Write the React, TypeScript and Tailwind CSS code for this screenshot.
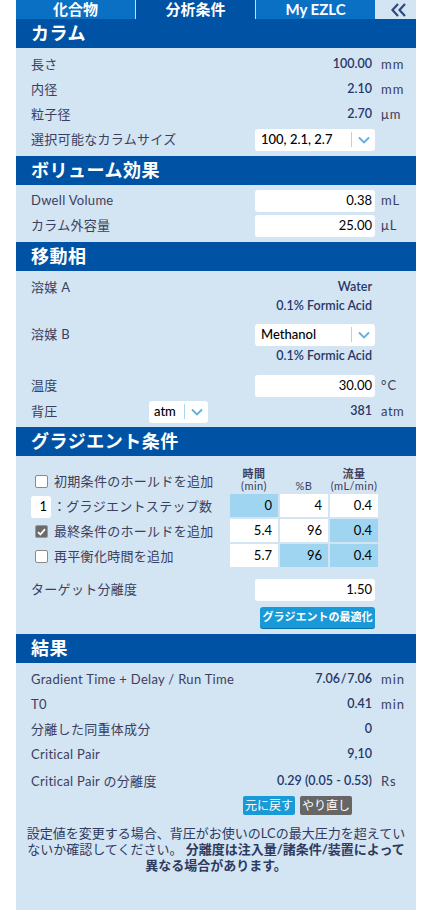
import React from "react";

const LABEL = "text-[13px] tracking-[0.3px] text-[#3b4060]";
const VALUE = "pr-[3px] text-[12.5px] font-semibold text-[#27376a] whitespace-nowrap";

function Chevron({ className = "" }: { className?: string }) {
  return (
    <svg width="12" height="8" viewBox="0 0 12 8" className={className}>
      <path d="M1 1.5 L6 6.5 L11 1.5" fill="none" stroke="#5fb0e0" strokeWidth="1.8" />
    </svg>
  );
}

function Header({ children }: { children: React.ReactNode }) {
  return (
    <div className="h-[29px] bg-[#0053a4] flex items-center pl-[15px] text-white text-[18px] font-bold tracking-[0.5px]">
      {children}
    </div>
  );
}

function Row({
  label,
  children,
  unit,
  className = "",
}: {
  label?: React.ReactNode;
  children?: React.ReactNode;
  unit?: React.ReactNode;
  className?: string;
}) {
  return (
    <div className={`flex items-center h-[25px] pl-[15px] ${className}`}>
      <div className={`flex-1 ${LABEL}`}>{label}</div>
      <div className="w-[120px] flex justify-end">{children}</div>
      <div className={`w-[41px] pl-[6px] ${LABEL} tracking-[1px]`}>{unit}</div>
    </div>
  );
}

function InputBox({ value }: { value: string }) {
  return (
    <div className="w-[120px] h-[22px] bg-white rounded-[3px] flex items-center justify-end pr-[3px] text-[13px] text-black">
      {value}
    </div>
  );
}

function Select({ value, width = "w-[120px]", textPad = "pl-[6px]" }: { value: string; width?: string; textPad?: string }) {
  return (
    <div className={`${width} h-[22px] bg-white rounded-[3px] flex items-center ${textPad}`}>
      <span className="flex-1 text-[13px] text-black font-medium">{value}</span>
      <div className="w-px h-[15px] bg-[#a9d6ef]" />
      <div className="w-[23px] flex justify-center">
        <Chevron />
      </div>
    </div>
  );
}

function Checkbox({ checked = false }: { checked?: boolean }) {
  if (checked) {
    return (
      <div className="w-[13px] h-[13px] rounded-[2px] bg-[#6b6b6b] border border-[#9a9a9a] flex items-center justify-center">
        <svg width="9" height="8" viewBox="0 0 9 8">
          <path d="M1 4.2 L3.4 6.5 L8 1.2" fill="none" stroke="white" strokeWidth="1.8" />
        </svg>
      </div>
    );
  }
  return <div className="w-[13px] h-[13px] rounded-[2px] bg-white border border-[#8a8a8a]" />;
}

function Cell({ v, blue }: { v: string; blue?: boolean }) {
  return (
    <div
      className={`h-[23px] flex items-center justify-end pr-[6px] text-[13px] text-black ${
        blue ? "bg-[#9fd5f1]" : "bg-white"
      }`}
    >
      {v}
    </div>
  );
}

export default function App() {
  return (
    <div className="w-[428px] h-[912px] bg-white font-['Lato','Noto_Sans_CJK_JP',sans-serif]">
      <div className="ml-4 w-[400px] h-[910px] bg-[#d3e4f3] flex flex-col">
        {/* Tabs */}
        <div className="flex h-[19px]">
          <div className="w-[119px] bg-[#0a70c4] text-white text-[15px] font-bold flex items-center justify-center leading-none">
            化合物
          </div>
          <div className="w-px bg-[#c9ddef]" />
          <div className="w-[119px] bg-[#0053a4] text-white text-[15px] font-bold flex items-center justify-center leading-none">
            分析条件
          </div>
          <div className="w-px bg-[#c9ddef]" />
          <div className="w-[119px] bg-[#0a70c4] text-white text-[15px] font-bold flex items-center justify-center leading-none">
            My EZLC
          </div>
          <div className="flex-1 flex items-center justify-center pl-[6px]">
            <svg width="17" height="14" viewBox="0 0 17 14">
              <path d="M8 1 L2.5 7 L8 13" fill="none" stroke="#2c4a7c" strokeWidth="2.2" />
              <path d="M15 1 L9.5 7 L15 13" fill="none" stroke="#2c4a7c" strokeWidth="2.2" />
            </svg>
          </div>
        </div>

        {/* カラム */}
        <Header>カラム</Header>
        <div className="pt-[4px] pb-[4px]">
          <Row label="長さ" unit="mm">
            <span className={VALUE}>100.00</span>
          </Row>
          <Row label="内径" unit="mm">
            <span className={VALUE}>2.10</span>
          </Row>
          <Row label="粒子径" unit="μm">
            <span className={VALUE}>2.70</span>
          </Row>
          <Row label="選択可能なカラムサイズ">
            <Select value="100, 2.1, 2.7" />
          </Row>
        </div>

        {/* ボリューム効果 */}
        <Header>ボリューム効果</Header>
        <div className="pt-[3px] pb-[4px]">
          <Row label="Dwell Volume" unit="mL">
            <InputBox value="0.38" />
          </Row>
          <Row label="カラム外容量" unit="μL">
            <InputBox value="25.00" />
          </Row>
        </div>

        {/* 移動相 */}
        <Header>移動相</Header>
        <div className="pt-[4px] pb-[3px]">
          <Row label="溶媒 A">
            <span className={VALUE}>Water</span>
          </Row>
          <Row className="!h-[13px]">
            <span className={VALUE}>0.1% Formic Acid</span>
          </Row>
          <Row label="溶媒 B" className="mt-[9px]">
            <Select value="Methanol" />
          </Row>
          <Row className="!h-[14px] mt-[2px]">
            <span className={VALUE}>0.1% Formic Acid</span>
          </Row>
          <Row label="温度" unit="°C" className="mt-[10px]">
            <InputBox value="30.00" />
          </Row>
          <div className="flex items-center h-[25px] pl-[15px] mt-[1px]">
            <div className={`w-[118px] ${LABEL}`}>背圧</div>
            <Select value="atm" width="w-[59px]" textPad="pl-[5px]" />
            <div className="flex-1 flex justify-end">
              <span className={VALUE}>381</span>
            </div>
            <div className={`w-[41px] pl-[6px] ${LABEL} tracking-[0.5px]`}>atm</div>
          </div>
        </div>

        {/* グラジエント条件 */}
        <Header>グラジエント条件</Header>
        <div className="flex">
          <div className="w-[214px] pt-[13px]">
            <div className="h-[25px] flex items-center pl-[19px] gap-[6px]">
              <Checkbox />
              <span className={LABEL}>初期条件のホールドを追加</span>
            </div>
            <div className="h-[25px] flex items-center pl-[15px]">
              <div className="w-[20px] h-[22px] bg-white rounded-[3px] flex items-center justify-end pr-[4px] text-[13px] text-black">
                1
              </div>
              <span className={`${LABEL} ml-[2px]`}>：グラジエントステップ数</span>
            </div>
            <div className="h-[25px] flex items-center pl-[19px] gap-[6px]">
              <Checkbox checked />
              <span className={LABEL}>最終条件のホールドを追加</span>
            </div>
            <div className="h-[25px] flex items-center pl-[19px] gap-[6px]">
              <Checkbox />
              <span className={LABEL}>再平衡化時間を追加</span>
            </div>
          </div>
          <div className="w-[148px] pt-[10px]">
            <div className="grid grid-cols-3 gap-x-[2px] h-[26px] items-end text-[11px] leading-[12px] text-[#3b4060] text-center tracking-[0.5px]">
              <div>
                <div className="font-bold">時間</div>
                <div>(min)</div>
              </div>
              <div>%B</div>
              <div>
                <div className="font-bold">流量</div>
                <div>(mL/min)</div>
              </div>
            </div>
            <div className="grid grid-cols-3 gap-[2px] mt-[2px]">
              <Cell v="0" blue />
              <Cell v="4" />
              <Cell v="0.4" />
              <Cell v="5.4" />
              <Cell v="96" />
              <Cell v="0.4" blue />
              <Cell v="5.7" />
              <Cell v="96" blue />
              <Cell v="0.4" blue />
            </div>
          </div>
        </div>
        <Row label="ターゲット分離度" className="mt-[8px]">
          <InputBox value="1.50" />
        </Row>
        <div className="flex justify-end pr-[41px] mt-[5px] mb-[6px]">
          <div className="w-[115px] h-[21px] rounded-[3px] bg-[#199ad8] text-white text-[11px] font-bold flex items-center justify-center shadow-[0_1px_0_#0b6fa8]">
            グラジエントの最適化
          </div>
        </div>

        {/* 結果 */}
        <Header>結果</Header>
        <div className="pt-[4px]">
          <Row label="Gradient Time + Delay / Run Time" unit="min">
            <span className={VALUE}>7.06{"\u200A"}/{"\u200A"}7.06</span>
          </Row>
          <Row label="T0" unit="min">
            <span className={VALUE}>0.41</span>
          </Row>
          <Row label="分離した同重体成分">
            <span className={VALUE}>0</span>
          </Row>
          <Row label="Critical Pair">
            <span className={VALUE}>9,10</span>
          </Row>
          <Row label="Critical Pair の分離度" unit="Rs" className="mt-[2px]">
            <span className={VALUE}>0.29 (0.05 - 0.53)</span>
          </Row>
        </div>
        <div className="flex justify-end gap-[5px] pr-[64px] mt-[2px]">
          <div className="w-[52px] h-[19px] rounded-[2px] bg-[#199ad8] text-white text-[12px] flex items-center justify-center">
            元に戻す
          </div>
          <div className="w-[52px] h-[19px] rounded-[2px] bg-[#666666] text-white text-[12px] flex items-center justify-center">
            やり直し
          </div>
        </div>
        <div className="mt-[10px] text-center text-[13px] leading-[16px] text-[#2f3a5f]">
          <div className="whitespace-nowrap">設定値を変更する場合、背圧がお使いのLCの最大圧力を超えてい</div>
          <div className="whitespace-nowrap">
            ないか確認してください。 <span className="font-bold">分離度は注入量/諸条件/装置によって</span>
          </div>
          <div className="whitespace-nowrap font-bold">異なる場合があります。</div>
        </div>
      </div>
    </div>
  );
}
